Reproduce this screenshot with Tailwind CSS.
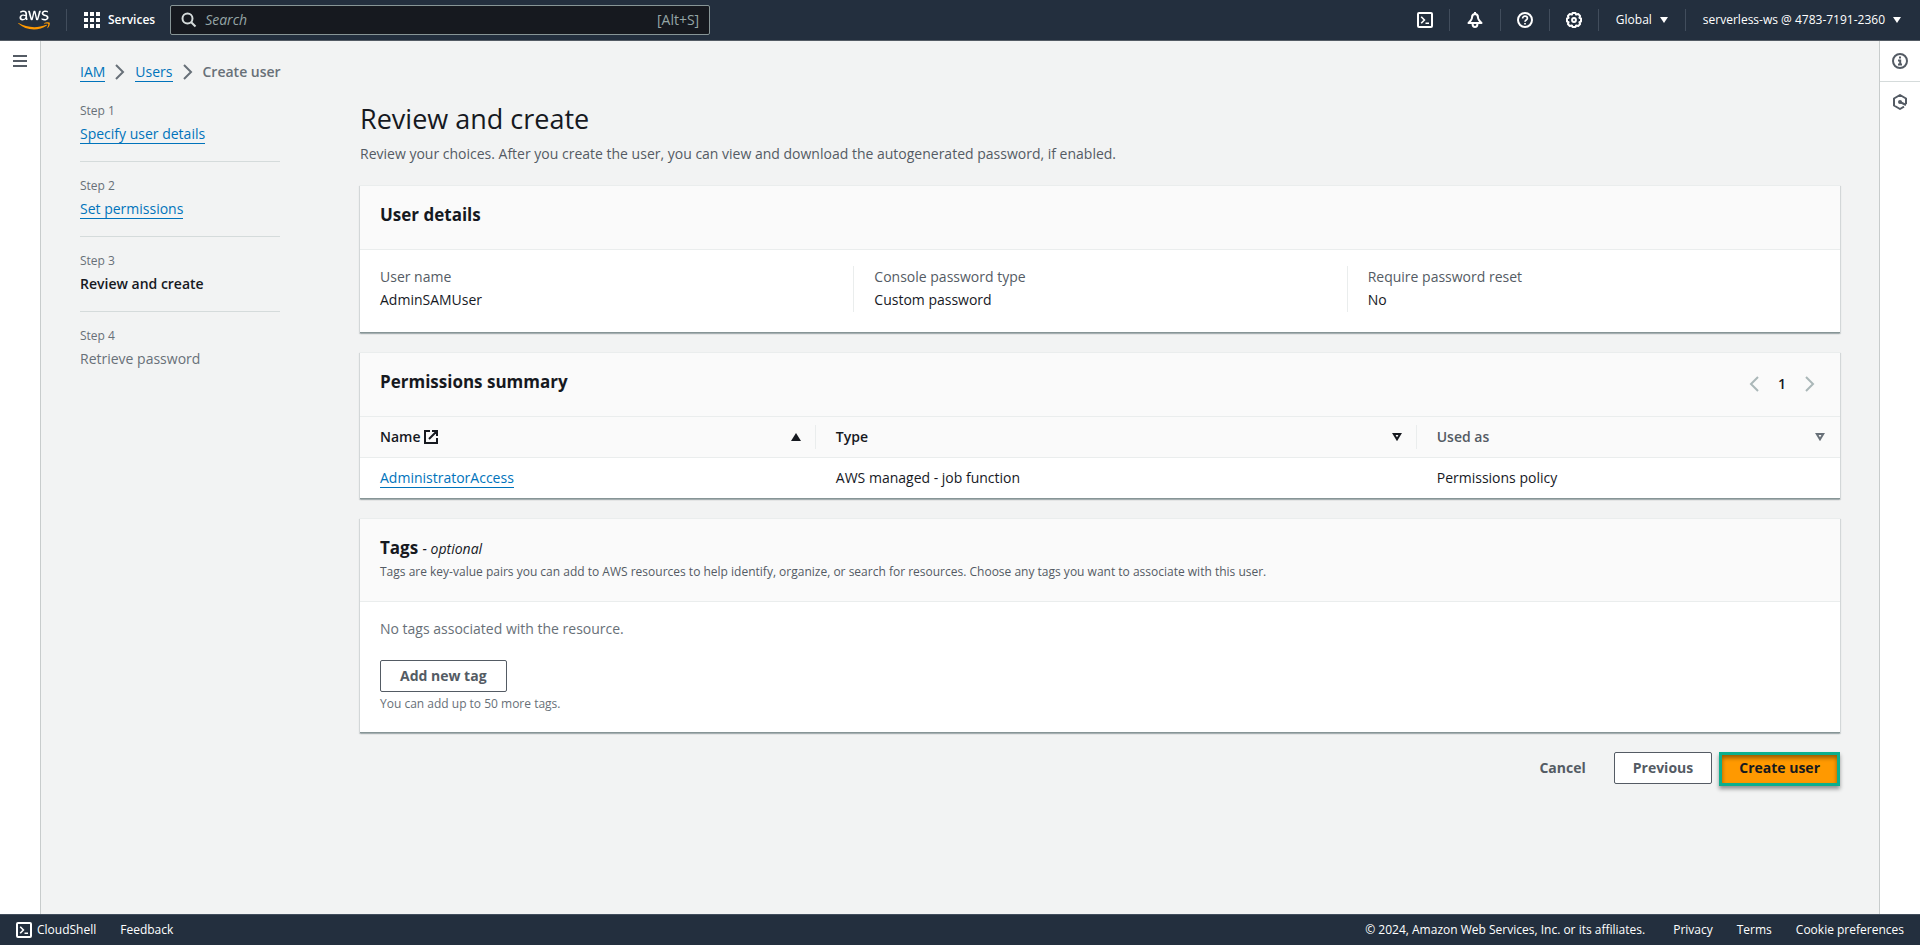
<!DOCTYPE html>
<html lang="en">
<head>
<meta charset="utf-8">
<meta name="viewport" content="width=device-width, initial-scale=1">
<title>Create user | IAM</title>
<script src="https://cdn.jsdelivr.net/npm/@tailwindcss/browser@4"></script>
</head>
<body class="flex min-h-screen flex-col bg-[#f2f3f3] font-['Open_Sans','Noto_Sans',sans-serif] text-sm text-[#16191f]">

<header class="flex h-[41px] shrink-0 items-center border-b border-[#545b64] bg-[#232f3e] text-xs font-medium text-white">
  <a href="#" aria-label="AWS home" class="ml-[18px] flex w-8 shrink-0">
    <svg class="h-5 w-8" viewBox="0 0 304 182" fill="#fff" aria-hidden="true">
      <path d="M86.4 66.4c0 3.7.4 6.7 1.1 8.9.8 2.2 1.8 4.6 3.2 7.2.5.8.7 1.6.7 2.3 0 1-.6 2-1.9 3l-6.3 4.2c-.9.6-1.8.9-2.6.9-1 0-2-.5-3-1.4-1.4-1.5-2.6-3.1-3.6-4.7-1-1.7-2-3.6-3.1-5.9-7.8 9.2-17.6 13.8-29.4 13.8-8.4 0-15.1-2.4-20-7.2-4.9-4.8-7.4-11.2-7.4-19.2 0-8.5 3-15.4 9.1-20.6 6.1-5.2 14.2-7.8 24.5-7.8 3.4 0 6.9.3 10.6.8 3.7.5 7.5 1.3 11.5 2.2v-7.3c0-7.6-1.6-12.9-4.7-16-3.2-3.1-8.6-4.6-16.3-4.6-3.5 0-7.1.4-10.8 1.3-3.7.9-7.3 2-10.8 3.4-1.6.7-2.8 1.1-3.5 1.3-.7.2-1.2.3-1.6.3-1.4 0-2.1-1-2.1-3.1v-4.9c0-1.6.2-2.8.7-3.5.5-.7 1.4-1.4 2.8-2.1 3.5-1.8 7.7-3.3 12.6-4.5C41 1.9 46.200 1.300 51.700 1.300c11.900 0 20.600 2.700 26.200 8.100 5.500 5.400 8.300 13.600 8.300 24.600v32.400zM45.800 81.600c3.300 0 6.700-.6 10.300-1.800 3.600-1.200 6.800-3.400 9.500-6.400 1.600-1.900 2.800-4 3.400-6.400.6-2.400 1-5.300 1-8.700v-4.200c-2.900-.7-6-1.300-9.200-1.700-3.200-.4-6.300-.6-9.400-.6-6.700 0-11.600 1.300-14.900 4-3.300 2.700-4.900 6.500-4.900 11.500 0 4.700 1.200 8.200 3.700 10.600 2.400 2.500 5.900 3.700 10.500 3.700zM126.100 92.400c-1.800 0-3-.3-3.800-1-.8-.6-1.500-2-2.100-3.900L96.700 10.200c-.6-2-.9-3.300-.9-4 0-1.600.8-2.500 2.400-2.500h9.800c1.900 0 3.200.3 3.900 1 .8.600 1.400 2 2 3.900l16.800 66.200 15.600-66.200c.5-2 1.100-3.300 1.900-3.900.8-.6 2.200-1 4-1h8c1.900 0 3.200.3 4 1 .8.600 1.500 2 1.900 3.900l15.800 67 17.300-67c.6-2 1.300-3.300 2-3.900.8-.6 2.100-1 3.900-1h9.300c1.600 0 2.500.8 2.500 2.500 0 .5-.1 1-.2 1.600-.1.600-.3 1.400-.7 2.500l-24.100 77.300c-.6 2-1.300 3.300-2.100 3.900-.8.600-2.100 1-3.800 1h-8.600c-1.900 0-3.200-.3-4-1-.8-.7-1.500-2-1.900-4L156 23l-15.400 64.400c-.5 2-1.100 3.300-1.900 4-.8.700-2.200 1-4 1zM254.600 95.100c-5.200 0-10.400-.6-15.400-1.800-5-1.200-8.900-2.500-11.500-4-1.600-.9-2.700-1.900-3.100-2.800-.4-.9-.6-1.900-.6-2.800v-5.100c0-2.100.8-3.100 2.300-3.100.6 0 1.200.1 1.800.3.600.2 1.500.6 2.500 1 3.400 1.500 7.100 2.700 11 3.500 4 .8 7.900 1.200 11.900 1.200 6.300 0 11.200-1.100 14.600-3.300 3.400-2.200 5.200-5.400 5.200-9.500 0-2.800-.9-5.100-2.700-7-1.800-1.900-5.200-3.600-10.100-5.200L246 52c-7.300-2.300-12.700-5.700-16-10.200-3.300-4.400-5-9.300-5-14.500 0-4.200.9-7.900 2.700-11.100 1.800-3.200 4.200-6 7.200-8.200 3-2.300 6.400-4 10.400-5.200 4-1.200 8.200-1.700 12.600-1.700 2.200 0 4.500.1 6.700.4 2.300.3 4.400.7 6.500 1.100 2 .5 3.900 1 5.700 1.600 1.800.6 3.200 1.200 4.200 1.800 1.400.8 2.400 1.600 3 2.500.6.800.9 1.900.9 3.300v4.700c0 2.100-.8 3.200-2.300 3.200-.8 0-2.100-.4-3.800-1.200-5.700-2.600-12.100-3.900-19.200-3.900-5.700 0-10.200.9-13.300 2.800-3.100 1.900-4.700 4.800-4.700 8.900 0 2.800 1 5.200 3 7.100 2 1.900 5.700 3.800 11 5.500l14.200 4.500c7.200 2.300 12.400 5.500 15.500 9.600 3.100 4.100 4.600 8.800 4.600 14 0 4.300-.9 8.200-2.600 11.600-1.800 3.400-4.200 6.400-7.300 8.800-3.100 2.500-6.800 4.300-11.100 5.600-4.500 1.400-9.200 2.100-14.300 2.100z"/>
      <path fill="#f90" d="M273.500 143.700c-32.900 24.300-80.700 37.200-121.800 37.200-57.600 0-109.500-21.300-148.700-56.700-3.100-2.800-.3-6.600 3.400-4.400 42.400 24.600 94.700 39.500 148.800 39.500 36.500 0 76.600-7.600 113.500-23.200 5.500-2.500 10.200 3.600 4.800 7.600zM287.200 128.100c-4.200-5.400-27.800-2.600-38.500-1.300-3.200.4-3.700-2.400-.8-4.500 18.800-13.200 49.700-9.400 53.300-5 3.600 4.500-1 35.400-18.600 50.200-2.700 2.300-5.300 1.100-4.100-1.900 4-9.900 12.900-32.200 8.700-37.500z"/>
    </svg>
  </a>
  <span class="ml-4 h-[22px] w-px bg-[#414d5c]"></span>
  <button type="button" class="ml-[17px] flex items-center gap-2 font-semibold">
    <svg class="size-4" viewBox="0 0 16 16" fill="currentColor" aria-hidden="true"><path d="M0 0h4v4H0zM6 0h4v4H6zM12 0h4v4h-4zM0 6h4v4H0zM6 6h4v4H6zM12 6h4v4h-4zM0 12h4v4H0zM6 12h4v4H6zM12 12h4v4h-4z"/></svg>
    Services
  </button>
  <label class="ml-[15px] flex h-[30px] w-[540px] items-center rounded-xs border border-[#879596] bg-[#16191f] px-[10px] text-sm font-normal">
    <svg class="size-4 shrink-0" viewBox="0 0 16 16" fill="none" stroke="#d5dbdb" stroke-width="2" aria-hidden="true"><circle cx="6.500" cy="6.500" r="5"/><path d="m10.200 10.200 4.300 4.300"/></svg>
    <input type="search" aria-label="Search" placeholder="Search" class="ml-2 min-w-0 flex-1 bg-transparent text-sm outline-none placeholder:text-[#95a5a6] placeholder:italic">
    <span class="text-[#95a5a6]">[Alt+S]</span>
  </label>

  <div class="ml-auto flex items-center">
    <button type="button" aria-label="CloudShell" class="flex w-12 justify-center">
      <svg class="size-4" viewBox="0 0 16 16" fill="none" stroke="currentColor" stroke-width="2" aria-hidden="true"><rect x="1" y="1" width="14" height="14" rx="1"/><path stroke-width="1.600" d="m4.200 4.800 3.200 3.200-3.200 3.200M8.500 11.200H12"/></svg>
    </button>
    <span class="h-[22px] w-px bg-[#414d5c]"></span>
    <button type="button" aria-label="Notifications" class="flex w-[50px] justify-center">
      <svg class="size-4" viewBox="0 0 16 16" fill="none" stroke="currentColor" stroke-width="2" stroke-linejoin="round" aria-hidden="true"><path d="M8 2C6 2 5 3.500 5 5.500 5 7.500 3.500 9 1.500 11h13C12.500 9 11 7.500 11 5.500 11 3.500 10 2 8 2zM8 0v2M5.600 12c0 1.800.9 3 2.400 3s2.400-1.200 2.400-3"/></svg>
    </button>
    <span class="h-[22px] w-px bg-[#414d5c]"></span>
    <button type="button" aria-label="Help" class="flex w-12 justify-center">
      <svg class="size-4" viewBox="0 0 16 16" fill="none" stroke="currentColor" stroke-width="2" aria-hidden="true"><circle cx="8" cy="8" r="7"/><path stroke-width="1.700" d="M5.600 6.500C5.600 5 6.600 4.200 8 4.200s2.400.8 2.400 2.100C10.400 8 8 8 8 9.800M8 10.900v1.600"/></svg>
    </button>
    <span class="h-[22px] w-px bg-[#414d5c]"></span>
    <button type="button" aria-label="Settings" class="flex w-12 justify-center">
      <svg class="size-4" viewBox="0 0 16 16" fill="none" stroke="currentColor" stroke-width="2" stroke-linejoin="round" aria-hidden="true"><path d="M6.500 1h3l.6 1.600 2.100-.6 1.900 1.900-.7 2 1.600.6v3l-1.600.6.700 2-1.900 1.900-2.100-.6-.6 1.600h-3l-.6-1.600-2.100.6-1.900-1.900.7-2L1 9.500v-3l1.600-.6-.7-2L3.800 2l2.100.6z"/><circle cx="8" cy="8" r="1.900"/></svg>
    </button>
    <span class="h-[22px] w-px bg-[#414d5c]"></span>
    <button type="button" class="flex items-center gap-2 px-[17px]">Global
      <svg class="h-[6px] w-2" viewBox="0 0 8 6" fill="currentColor" aria-hidden="true"><path d="M0 0h8L4 6z"/></svg></button>
    <span class="h-[22px] w-px bg-[#414d5c]"></span>
    <button type="button" class="flex items-center gap-2 pr-[19px] pl-[17px]">serverless-ws @ 4783-7191-2360
      <svg class="h-[6px] w-2" viewBox="0 0 8 6" fill="currentColor" aria-hidden="true"><path d="M0 0h8L4 6z"/></svg></button>
  </div>
</header>

<div class="flex flex-1">
  <aside class="w-[41px] shrink-0 border-r border-[#c8cccc] bg-white">
    <button type="button" aria-label="Open navigation" class="flex h-10 w-10 items-center justify-center">
      <svg class="h-3 w-[14px]" viewBox="0 0 14 12" fill="#545b64" aria-hidden="true"><path d="M0 0h14v2H0zM0 5h14v2H0zM0 10h14v2H0z"/></svg>
    </button>
  </aside>

  <main class="min-w-0 flex-1 pt-5 pr-[39px] pb-10 pl-[39px]">
    <nav aria-label="Breadcrumbs">
      <ol class="flex h-[22px] items-center gap-[9px]">
        <li><a href="#" class="border-b border-[#0073bb] text-[#0073bb]">IAM</a></li>
        <li aria-hidden="true"><svg class="h-4 w-3" viewBox="0 0 12 16" fill="none" stroke="#687078" stroke-width="2"><path d="m2 1 7 7-7 7"/></svg></li>
        <li><a href="#" class="border-b border-[#0073bb] text-[#0073bb]">Users</a></li>
        <li aria-hidden="true"><svg class="h-4 w-3" viewBox="0 0 12 16" fill="none" stroke="#687078" stroke-width="2"><path d="m2 1 7 7-7 7"/></svg></li>
        <li class="font-semibold text-[#687078]" aria-current="page">Create user</li>
      </ol>
    </nav>

    <div class="flex gap-20">
      <nav aria-label="Steps" class="w-[200px] shrink-0 pt-[18px]">
        <ol>
          <li class="h-[61px] border-b border-[#d5dbdb]"><div class="text-xs leading-5 text-[#687078]">Step 1</div><a href="#" class="mt-1 inline-block border-b border-[#0073bb] leading-[18px] text-[#0073bb]">Specify user details</a></li>
          <li class="mt-[14px] h-[61px] border-b border-[#d5dbdb]"><div class="text-xs leading-5 text-[#687078]">Step 2</div><a href="#" class="mt-1 inline-block border-b border-[#0073bb] leading-[18px] text-[#0073bb]">Set permissions</a></li>
          <li class="mt-[14px] h-[61px] border-b border-[#d5dbdb]" aria-current="step"><div class="text-xs leading-5 text-[#687078]">Step 3</div><span class="mt-1 inline-block leading-[18px] font-semibold">Review and create</span></li>
          <li class="mt-[14px]"><div class="text-xs leading-5 text-[#687078]">Step 4</div><span class="mt-1 inline-block leading-[18px] text-[#687078]">Retrieve password</span></li>
        </ol>
      </nav>

      <div class="min-w-0 flex-1 pt-[18px]">
        <h1 class="text-[27px] leading-9">Review and create</h1>
        <p class="mt-[6px] text-sm leading-[22px] text-[#545b64]">Review your choices. After you create the user, you can view and download the autogenerated password, if enabled.</p>

        <section class="mt-5 border-t border-[#eaeded] bg-white shadow-[0_1px_1px_0_rgba(0,28,36,0.15),1px_1px_1px_0_rgba(0,28,36,0.1),-1px_1px_1px_0_rgba(0,28,36,0.1)]">
          <div class="flex h-16 items-center border-b border-[#eaeded] bg-[#fafafa] px-5 pb-[6px]"><h2 class="text-[17px] leading-[22px] font-bold">User details</h2></div>
          <dl class="grid grid-cols-3 border-b border-[#879596] pt-4 pb-5 leading-6">
            <div class="h-[46px] px-5"><dt class="leading-[22px] text-[#545b64]">User name</dt><dd>AdminSAMUser</dd></div>
            <div class="h-[46px] border-l border-[#eaeded] px-5"><dt class="leading-[22px] text-[#545b64]">Console password type</dt><dd>Custom password</dd></div>
            <div class="h-[46px] border-l border-[#eaeded] px-5"><dt class="leading-[22px] text-[#545b64]">Require password reset</dt><dd>No</dd></div>
          </dl>
        </section>

        <section class="mt-[19px] border-t border-[#eaeded] bg-white shadow-[0_1px_1px_0_rgba(0,28,36,0.15),1px_1px_1px_0_rgba(0,28,36,0.1),-1px_1px_1px_0_rgba(0,28,36,0.1)]">
          <div class="flex h-16 items-center border-b border-[#eaeded] bg-[#fafafa] px-5 pb-[6px]">
            <h2 class="text-[17px] leading-[22px] font-bold">Permissions summary</h2>
            <div class="mr-[5px] ml-auto flex items-center gap-[19px] pt-1">
              <button type="button" aria-label="Previous page" disabled><svg class="h-4 w-[10px]" viewBox="0 0 10 16" fill="none" stroke="#aab7b8" stroke-width="2"><path d="M9 1 2 8l7 7"/></svg></button>
              <button type="button" aria-label="Page 1" class="font-semibold">1</button>
              <button type="button" aria-label="Next page" disabled><svg class="h-4 w-[10px]" viewBox="0 0 10 16" fill="none" stroke="#aab7b8" stroke-width="2"><path d="m1 1 7 7-7 7"/></svg></button>
            </div>
          </div>
          <table class="w-full table-fixed border-separate border-spacing-0 text-left">
            <colgroup><col class="w-[30.8%]"><col class="w-[40.6%]"><col></colgroup>
            <thead class="bg-[#fafafa]">
              <tr class="h-[41px]">
                <th scope="col" class="border-b border-[#eaeded] p-0 font-semibold"><div class="flex h-6 items-center border-r border-[#eaeded] pr-[14px] pl-5">Name
                  <svg class="ml-[3px] size-[14px]" viewBox="0 0 14 14" fill="none" stroke="currentColor" stroke-width="2" aria-hidden="true"><path d="M6 1H1v12h12V8M8 1h5v5M13 1 5 9"/></svg>
                  <svg class="ml-auto h-2 w-[10px]" viewBox="0 0 10 8" fill="currentColor" aria-hidden="true"><path d="M5 0l5 8H0z"/></svg></div></th>
                <th scope="col" class="border-b border-[#eaeded] p-0 font-semibold"><div class="flex h-6 items-center border-r border-[#eaeded] pr-[14px] pl-5">Type
                  <svg class="ml-auto h-2 w-[10px]" viewBox="0 0 10 8" fill="none" stroke="currentColor" stroke-width="2" aria-hidden="true"><path d="M1.800 1h6.400L5 6.300z"/></svg></div></th>
                <th scope="col" class="border-b border-[#eaeded] p-0 font-semibold text-[#545b64]"><div class="flex h-6 items-center pr-[15px] pl-5">Used as
                  <svg class="ml-auto h-2 w-[10px]" viewBox="0 0 10 8" fill="none" stroke="#687078" stroke-width="2" aria-hidden="true"><path d="M1.800 1h6.400L5 6.300z"/></svg></div></th>
              </tr>
            </thead>
            <tbody>
              <tr class="h-[41px]">
                <td class="border-b border-[#879596] py-0 pl-5"><a href="#" class="border-b border-[#0073bb] text-[#0073bb]">AdministratorAccess</a></td>
                <td class="border-b border-[#879596] py-0 pl-5">AWS managed - job function</td>
                <td class="border-b border-[#879596] py-0 pl-5">Permissions policy</td>
              </tr>
            </tbody>
          </table>
        </section>

        <section class="mt-[19px] border-t border-[#eaeded] bg-white shadow-[0_1px_1px_0_rgba(0,28,36,0.15),1px_1px_1px_0_rgba(0,28,36,0.1),-1px_1px_1px_0_rgba(0,28,36,0.1)]">
          <div class="h-[83px] border-b border-[#eaeded] bg-[#fafafa] px-5 pt-[18px]">
            <h2 class="text-[17px] leading-[22px] font-bold">Tags <span class="text-sm font-normal italic">- optional</span></h2>
            <p class="mt-[3px] text-xs leading-5 text-[#545b64]">Tags are key-value pairs you can add to AWS resources to help identify, organize, or search for resources. Choose any tags you want to associate with this user.</p>
          </div>
          <div class="border-b border-[#879596] px-5 pt-4 pb-[18px]">
            <p class="leading-[22px] text-[#687078]">No tags associated with the resource.</p>
            <button type="button" class="mt-5 block h-8 rounded-xs border border-[#545b64] bg-white px-[19px] font-bold text-[#545b64]">Add new tag</button>
            <p class="mt-[2px] text-xs leading-5 text-[#687078]">You can add up to 50 more tags.</p>
          </div>
        </section>

        <div class="mt-[19px] flex items-start justify-end font-bold">
          <button type="button" class="mr-2 h-8 px-5 text-[#545b64]">Cancel</button>
          <button type="button" class="h-8 rounded-xs border border-[#545b64] bg-white px-[18px] text-[#545b64]">Previous</button>
          <button type="button" class="ml-[7px] h-[34px] border-3 border-[#0caf8e] bg-[#ff9900] px-[17px] pb-[2px] shadow-[0_3px_4px_rgba(0,0,0,0.4),inset_0_3px_4px_rgba(0,0,0,0.4)]">Create user</button>
        </div>
      </div>
    </div>
  </main>

  <aside class="w-[41px] shrink-0 border-l border-[#c8cccc] bg-white">
    <button type="button" aria-label="Info" class="flex h-[41px] w-full items-center justify-center border-b border-[#d5dbdb]">
      <svg class="size-4" viewBox="0 0 16 16" fill="none" stroke="#545b64" stroke-width="2" aria-hidden="true"><circle cx="8" cy="8" r="7"/><path d="M7 4.500h2M6 7.500h2.200v3.500M6 11.500h4"/></svg>
    </button>
    <button type="button" aria-label="Tutorials" class="flex h-10 w-full items-center justify-center">
      <svg class="size-4" viewBox="0 0 16 16" fill="none" stroke="#545b64" stroke-width="2" stroke-linejoin="round" aria-hidden="true"><path d="M14 10V4.500L8 1 2 4.500v7L8 15l4-2.300M8 8l6 3"/><circle cx="8" cy="8" r="1" fill="#545b64"/></svg>
    </button>
  </aside>
</div>

<footer class="flex h-[31px] shrink-0 items-center border-t border-[#414d5c] bg-[#232f3e] px-4 text-xs font-medium text-white">
  <button type="button" class="flex items-center gap-[5px]">
    <svg class="size-4" viewBox="0 0 16 16" fill="none" stroke="currentColor" stroke-width="2" aria-hidden="true"><rect x="1" y="1" width="14" height="14" rx="1"/><path stroke-width="1.600" d="m4.200 4.800 3.200 3.200-3.200 3.200M8.500 11.200H12"/></svg>
    CloudShell
  </button>
  <a href="#" class="ml-6">Feedback</a>
  <span class="ml-auto">© 2024, Amazon Web Services, Inc. or its affiliates.</span>
  <a href="#" class="ml-7">Privacy</a>
  <a href="#" class="ml-6">Terms</a>
  <a href="#" class="ml-6">Cookie preferences</a>
</footer>
</body>
</html>
